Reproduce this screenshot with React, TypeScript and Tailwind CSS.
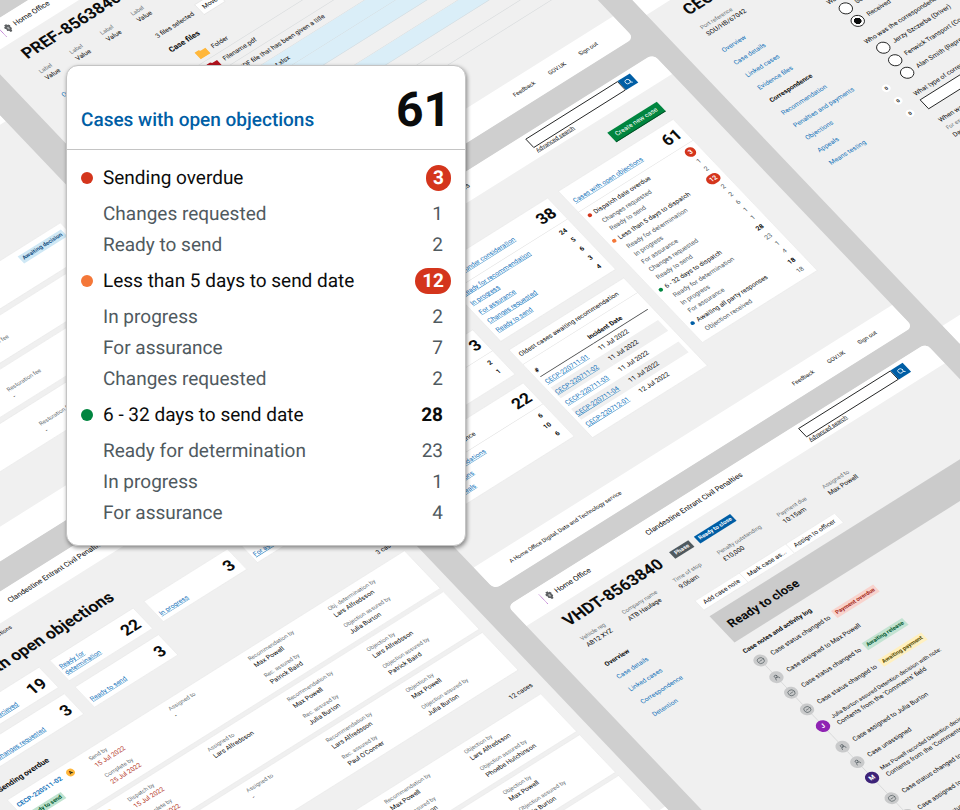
import React from "react";
import { CircleMinus, Search, UserRound } from "lucide-react";

const LINK = "text-[#1373ba] underline decoration-1 underline-offset-2";

type Line = { label: string; value: string; dot?: string; badge?: boolean };

function Logo() {
  return (
    <div className="flex items-center gap-2">
      <span className="h-[30px] w-0 border-l-2 border-dotted border-[#8f23b3]" />
      <svg width="18" height="26" viewBox="0 0 16 22" fill="#5c5f61" aria-hidden="true">
        <path d="M5 1h6l-1 3h3l2 4-2 3 1 4-3 2-1 4H6l-1-4-3-2 1-4-2-3 2-4h3z" />
        <path d="M6 8h4v5l-2 2-2-2z" fill="#a9abac" />
      </svg>
      <span className="text-[18px] leading-6">Home Office</span>
    </div>
  );
}

function TopBar({ id }: { id: string }) {
  return (
    <header className="grid h-[67px] shrink-0 grid-cols-[298px_1fr_300px] bg-white px-[75px]">
      <div className="pt-[18px]">
        <Logo />
      </div>
      <div className="pt-5 text-[18px] leading-6">Clandestine Entrant Civil Penalties</div>
      <form className="pt-2.5" onSubmit={(e) => e.preventDefault()}>
        <div className="flex h-[30px]">
          <input id={id} type="text" aria-label="Search cases" className="min-w-0 flex-1 border-2 border-[#0b0c0c] bg-white px-2" />
          <button type="submit" aria-label="Search" className="flex w-[35px] items-center justify-center bg-[#005ea5] text-white">
            <Search size={18} strokeWidth={2.5} />
          </button>
        </div>
        <a href="#advanced" className="block text-[14px] leading-5 underline">
          Advanced search
        </a>
      </form>
    </header>
  );
}

function BottomBar() {
  return (
    <footer className="flex h-[73px] shrink-0 items-center justify-between bg-white px-[75px] text-[14px]">
      <span>A Home Office Digital, Data and Technology service</span>
      <nav className="flex gap-10">
        <a href="#feedback">Feedback</a>
        <a href="#govuk">GOV.UK</a>
        <a href="#signout">Sign out</a>
      </nav>
    </footer>
  );
}

function Screen({ place, id, children }: { place: string; id: string; children: React.ReactNode }) {
  return (
    <section className={`absolute flex w-[1200px] flex-col overflow-hidden rounded-[16px] bg-[#f0f0f0] ${place}`}>
      <TopBar id={id} />
      <div className="flex-1 px-[75px]">{children}</div>
      <BottomBar />
    </section>
  );
}

function Field({ label, value, red }: { label: string; value: string; red?: boolean }) {
  return (
    <div>
      <div className="text-[14px] leading-5 text-[#6a7276]">{label}</div>
      <div className={red ? "text-[16px] leading-[22px] text-[#b5382a]" : "text-[16px] leading-[22px]"}>{value}</div>
    </div>
  );
}

function CaseHead({ title, tags, fields }: { title: string; tags?: React.ReactNode; fields: [string, string][] }) {
  return (
    <>
      <div className="flex items-center gap-8 pt-6">
        <h1 className="text-[40px] leading-10 font-bold">{title}</h1>
        <div className="flex items-center gap-4">{tags}</div>
      </div>
      <div className="flex gap-12 pt-[26px]">
        {fields.map(([l, v], i) => (
          <Field key={i} label={l} value={v} />
        ))}
      </div>
    </>
  );
}

function SideNav({ items, current, counts }: { items: string[]; current: string; counts?: Record<string, number> }) {
  return (
    <nav className="w-[240px] shrink-0">
      {items.map((item) => (
        <div key={item} className="flex h-[42px] items-center justify-between text-[16px]">
          <a href="#case" className={item === current ? "font-bold" : "text-[#1373ba]"}>
            {item}
          </a>
          {counts && item in counts && (
            <span className="flex size-5 items-center justify-center rounded-full bg-white text-[12px] font-bold">{counts[item]}</span>
          )}
        </div>
      ))}
    </nav>
  );
}

const FILES = [
  { name: "Folder", kind: "#ffb73b" },
  { name: "Filename.pdf", kind: "#b1121d" },
  { name: "A PDF file that has been given a title", kind: "#b1121d" },
  { name: "Spreadsheet.xlsx", kind: "#00703c", on: true },
  { name: "", on: true },
  { name: "" },
  { name: "", on: true },
  { name: "" },
  { name: "" },
];

function FilesScreen() {
  return (
    <Screen id="search-files" place="left-[-127px] top-[37px] min-h-[878px]">
      <CaseHead
        title="PREF-8563840"
        fields={[
          ["Label", "Value"],
          ["Label", "Value"],
          ["Label", "Value"],
          ["Label", "Value"],
        ]}
      />
      <div className="flex gap-[30px] pt-[26px]">
        <SideNav items={["Overview", "Case details", "Evidence files"]} current="Evidence files" />
        <div className="flex-1">
          <div className="flex items-center gap-4 pt-1 text-[16px]">
            <span>3 files selected</span>
            <button className="h-[34px] border border-[#d0d0d0] bg-white px-2.5">Move</button>
          </div>
          <h2 className="pt-[18px] text-[19px] leading-6 font-bold">Case files</h2>
          <div className="mt-4">
            {FILES.map((f, i) => (
              <div
                key={i}
                className={`flex h-[41px] items-center gap-3 border-b border-[#cfd3d5] pl-10 text-[16px] ${f.on ? "bg-[#daeef8]" : ""}`}
              >
                {f.kind && (
                  <svg width="30" height="24" viewBox="0 0 30 24" fill={f.kind} aria-hidden="true">
                    <path d="M1 1h11l3 4h14v18H1z" />
                  </svg>
                )}
                <span>{f.name}</span>
              </div>
            ))}
          </div>
        </div>
      </div>
    </Screen>
  );
}

function RestorationScreen() {
  return (
    <Screen id="search-restoration" place="left-[-1397px] top-[195px] min-h-[984px]">
      <div className="flex flex-col gap-3 pt-[285px]">
        {[0, 1, 2, 3].map((n) => (
          <div key={n} className="flex h-[102px] justify-between border border-[#dedede] bg-white pl-[667px]">
            <div className="pt-11">
              <Field label="Restoration fee" value="-" />
            </div>
            {n === 0 && (
              <span className="mt-3.5 mr-2.5 flex h-[23px] items-center bg-[#cfe8f5] px-1.5 text-[14px] font-bold text-[#144e81]">
                Awaiting decision
              </span>
            )}
          </div>
        ))}
      </div>
    </Screen>
  );
}

function CountCard({ title, total, plain, rows }: { title: string; total: number; plain?: boolean; rows: [string, number][] }) {
  return (
    <div className="border border-[#dedede] bg-white">
      <div className="flex h-[70px] items-end justify-between border-b border-[#d5d5d5] px-2.5 pt-4 pb-4">
        {plain ? (
          <span className="text-[16px] leading-6">{title}</span>
        ) : (
          <a href="#cases" className={`text-[16px] leading-6 ${LINK}`}>
            {title}
          </a>
        )}
        <strong className="self-start text-[40px] leading-10">{total}</strong>
      </div>
      <div className="pt-1.5 pr-5 pb-3 pl-2.5">
        {rows.map(([l, n]) => (
          <div key={l} className="flex h-[30px] items-center justify-between text-[16px]">
            <a href="#cases" className={LINK}>
              {l}
            </a>
            <strong>{n}</strong>
          </div>
        ))}
      </div>
    </div>
  );
}

const DISPATCH: Line[] = [
  { label: "Dispatch date overdue", value: "3", dot: "bg-[#d4351c]", badge: true },
  { label: "Changes requested", value: "1" },
  { label: "Ready to send", value: "2" },
  { label: "Less than 5 days to dispatch", value: "12", dot: "bg-[#f47738]", badge: true },
  { label: "Ready for determination", value: "2" },
  { label: "In progress", value: "2" },
  { label: "For assurance", value: "6" },
  { label: "Changes requested", value: "1" },
  { label: "Ready to send", value: "1" },
  { label: "6 - 32 days to dispatch", value: "28", dot: "bg-[#00853f]" },
  { label: "Ready for determination", value: "23" },
  { label: "In progress", value: "1" },
  { label: "For assurance", value: "4" },
  { label: "Awaiting all party responses", value: "18", dot: "bg-[#005ea5]" },
  { label: "Objection received", value: "18" },
];

function DispatchCard() {
  return (
    <div className="border border-[#dedede] bg-white pb-2.5">
      <div className="flex h-[70px] items-end justify-between border-b border-[#d5d5d5] px-2.5 pt-4 pb-4">
        <a href="#objections" className={`text-[16px] leading-6 ${LINK}`}>
          Cases with open objections
        </a>
        <strong className="self-start text-[40px] leading-10">61</strong>
      </div>
      <ul className="pt-1 pr-5 pl-2.5 text-[16px]">
        {DISPATCH.map((r, i) => (
          <li key={i} className={`flex items-center ${r.dot ? "h-[34px]" : "h-[26px] text-[#505a5f]"}`}>
            <span className={`mr-2 size-2.5 rounded-full ${r.dot ?? ""}`} />
            <span className="flex-1">{r.label}</span>
            {r.badge ? (
              <strong className="-mr-2 rounded-full bg-[#d4351c] px-2 leading-[26px] text-white">{r.value}</strong>
            ) : r.dot ? (
              <strong>{r.value}</strong>
            ) : (
              <span>{r.value}</span>
            )}
          </li>
        ))}
      </ul>
    </div>
  );
}

const OLDEST: [string, string][] = [
  ["CECP-220711-01", "11 Jul 2022"],
  ["CECP-220711-02", "11 Jul 2022"],
  ["CECP-220711-03", "11 Jul 2022"],
  ["CECP-220711-04", "11 Jul 2022"],
  ["CECP-220712-01", "12 Jul 2022"],
];

function DashboardScreen() {
  return (
    <Screen id="search-dashboard" place="left-[-120px] top-[974px] min-h-[915px]">
      <div className="flex justify-end pt-[38px]">
        <button className="h-[32px] border-b-2 border-[#00401e] bg-[#00853f] px-3 text-[16px] text-white">Create new case</button>
      </div>
      <div className="grid grid-cols-3 items-start gap-[30px] pt-[26px]">
        <div className="flex flex-col gap-7">
          <CountCard title="Cases on hold" total={5} rows={[["Awaiting evidence", 3], ["Awaiting payment", 2]]} />
          <CountCard title="Cases with appeals" total={3} rows={[["In progress", 2], ["Ready to send", 1]]} />
          <CountCard
            title="Cases for assurance"
            plain
            total={22}
            rows={[
              ["Recommendations", 6],
              ["Objections", 10],
              ["Appeals", 6],
            ]}
          />
        </div>
        <div className="flex flex-col gap-7">
          <CountCard
            title="Cases under consideration"
            total={38}
            rows={[
              ["Ready for recommendation", 24],
              ["In progress", 5],
              ["For assurance", 6],
              ["Changes requested", 3],
              ["Ready to send", 4],
            ]}
          />
          <div className="border border-[#dedede] bg-white pb-4 text-[16px]">
            <div className="border-b border-[#d5d5d5] px-2.5 py-3 leading-6">Oldest cases awaiting recommendation</div>
            <div className="px-2.5 pt-3">
              <table className="w-full border-collapse text-left">
                <thead>
                  <tr className="h-9 border-b-2 border-[#3a3c3d]">
                    <th className="w-[152px]">#</th>
                    <th>Incident Date</th>
                  </tr>
                </thead>
                <tbody>
                  {OLDEST.map(([c, d]) => (
                    <tr key={c} className="h-[36px] even:bg-[#f0f0f0]">
                      <td>
                        <a href="#case" className={LINK}>
                          {c}
                        </a>
                      </td>
                      <td>{d}</td>
                    </tr>
                  ))}
                </tbody>
              </table>
            </div>
          </div>
        </div>
        <DispatchCard />
      </div>
    </Screen>
  );
}

const TILES: [string, number][] = [
  ["Objection recieved", 19],
  ["Ready for determination", 22],
  ["In progress", 3],
  ["For assurance", 5],
  ["Changes requested", 3],
  ["Ready to send", 3],
];

type CaseRow = {
  send: string;
  done: string;
  assigned: string;
  rec: string;
  recBy: string;
  objLabel: string;
  obj: string;
  objBy: string;
};

const OVERDUE: CaseRow[] = [
  { send: "Send by", done: "25 Jul 2022", assigned: "-", rec: "Max Powell", recBy: "Patrick Baird", objLabel: "Obj. determination by", obj: "Lars Alfredsson", objBy: "Julia Burton" },
  { send: "Dispatch by", done: "25 Jul 2022", assigned: "Lars Alfredsson", rec: "Max Powell", recBy: "Julia Burton", objLabel: "Objection by", obj: "Lars Alfredsson", objBy: "Patrick Baird" },
  { send: "Dispatch by", done: "25 Jul 2022", assigned: "-", rec: "Lars Alfredsson", recBy: "Paul O'Conner", objLabel: "Objection by", obj: "Max Powell", objBy: "Julia Burton" },
];

const SOON: CaseRow[] = [
  { send: "Dispatch by", done: "25 Jul 2022", assigned: "-", rec: "Max Powell", recBy: "Julia Burton", objLabel: "Objection by", obj: "Lars Alfredsson", objBy: "Phoebe Hutchinson" },
  { send: "Dispatch by", done: "25 Jul 2022", assigned: "-", rec: "Max Powell", recBy: "Julia Burton", objLabel: "Objection by", obj: "Max Powell", objBy: "Julia Burton" },
  { send: "Dispatch by", done: "25 Jul 2022", assigned: "-", rec: "Max Powell", recBy: "Julia Burton", objLabel: "Objection by", obj: "Max Powell", objBy: "Julia Burton" },
];

function CaseGroup({ title, count, rows }: { title: string; count: string; rows: CaseRow[] }) {
  return (
    <div className="-mx-[45px] pt-9">
      <div className="flex justify-between leading-6">
        <h2 className="text-[19px] font-bold">{title}</h2>
        <span className="text-[16px]">{count}</span>
      </div>
      <div className="flex flex-col gap-2.5 pt-[19px]">
        {rows.map((r, i) => (
          <div
            key={i}
            className="grid h-[127px] grid-cols-[196px_repeat(4,1fr)] gap-3 border border-[#dedede] bg-white pt-[13px] pr-5 pl-2"
          >
            <div>
              <div className="flex items-center gap-4">
                <a href="#case" className="text-[16px] leading-6 font-bold text-[#1373ba]">
                  CECP-220511-02
                </a>
                <span className="flex size-5 items-center justify-center rounded-full bg-[#ffb73b] text-[12px] font-bold">A</span>
              </div>
              <span className="mt-4 inline-block bg-[#bfe3cf] px-1.5 text-[14px] leading-5 font-bold text-[#005a30]">Ready to send</span>
            </div>
            <div className="flex flex-col gap-3.5">
              <Field label={r.send} value="15 Jul 2022" red />
              <Field label="Complete by" value={r.done} red />
            </div>
            <Field label="Assigned to" value={r.assigned} />
            <div className="flex flex-col gap-3.5">
              <Field label="Recommendation by" value={r.rec} />
              <Field label="Rec. assured by" value={r.recBy} />
            </div>
            <div className="flex flex-col gap-3.5">
              <Field label={r.objLabel} value={r.obj} />
              <Field label="Objection assured by" value={r.objBy} />
            </div>
          </div>
        ))}
      </div>
    </div>
  );
}

function ObjectionsScreen() {
  return (
    <Screen id="search-objections" place="left-[-1385px] top-[1242px] min-h-[1400px]">
      <div className="flex gap-5 pt-3 text-[14px] leading-5">
        <a href="#home">Dashboard</a>
        <span>Cases with open objections</span>
      </div>
      <h1 className="pt-9 text-[40px] leading-10 font-bold">Cases with open objections</h1>
      <div className="grid grid-cols-4 gap-x-[30px] gap-y-5 pt-[35px]">
        {TILES.map(([label, n]) => (
          <div key={label} className="flex h-[69px] justify-between border border-[#dedede] bg-white pr-2.5 pl-1.5">
            <div className="w-[140px] self-end pb-2.5 text-[16px] leading-5">
              <a href="#cases" className={LINK}>
                {label}
              </a>
            </div>
            <strong className="pt-[17px] pr-1 text-[40px] leading-10">{n}</strong>
          </div>
        ))}
      </div>
      <CaseGroup title="Sending overdue" count="3 cases" rows={OVERDUE} />
      <CaseGroup title="Less than 5 days to send date" count="12 cases" rows={SOON} />
    </Screen>
  );
}

type Event = { kind: "status" | "person" | "note"; text: string; tag?: string; tone?: string; initial?: string; by?: string };

const LOG: Event[] = [
  { kind: "status", text: "Case status changed to", tag: "Payment overdue", tone: "bg-[#f8d3cd] text-[#a82a1a]" },
  { kind: "person", text: "Case assigned to Max Powell" },
  { kind: "status", text: "Case status changed to", tag: "Awaiting release", tone: "bg-[#c3e3d2] text-[#005a30]" },
  { kind: "status", text: "Case status changed to", tag: "Awaiting payment", tone: "bg-[#fff0bf] text-[#594d00]" },
  { kind: "note", text: "Contents from the ‘Comments’ field", by: "Julia Burton assured Detention decision with note:", initial: "J", tone: "bg-[#8f23b3]" },
  { kind: "person", text: "Case assigned to Julia Burton" },
  { kind: "person", text: "Case unassigned" },
  { kind: "note", text: "Contents from the ‘Comments’ field", by: "Max Powell recorded Detention decision with note:", initial: "M", tone: "bg-[#3d2378]" },
  { kind: "status", text: "Case status changed to", tag: "Awaiting decision", tone: "bg-[#cfe8f5] text-[#144e81]" },
  { kind: "person", text: "Case assigned to Max Powell" },
  { kind: "status", text: "Case status changed to", tag: "Awaiting decision", tone: "bg-[#cfe8f5] text-[#144e81]" },
];

function LogItem({ e, last }: { e: Event; last: boolean }) {
  const height = e.kind === "note" ? "h-[69px]" : e.kind === "status" ? "h-[56px]" : "h-[52px]";
  return (
    <li className={`flex gap-[15px] ${height}`}>
      <div className="flex w-8 flex-col items-center">
        <span
          className={`flex size-8 shrink-0 items-center justify-center rounded-full text-[16px] font-bold ${
            e.initial ? `text-white ${e.tone}` : "bg-[#c9cacb] text-[#505a5f]"
          }`}
        >
          {e.initial ?? (e.kind === "status" ? <CircleMinus size={19} /> : <UserRound size={16} strokeWidth={2.5} />)}
        </span>
        {!last && <span className="w-px flex-1 bg-[#c9cacb]" />}
      </div>
      {e.kind === "note" ? (
        <div className="text-[16px] leading-6 whitespace-nowrap">
          <div className="text-[14px] leading-[18px]">{e.by}</div>
          {e.text}
        </div>
      ) : (
        <div className="flex h-8 items-center gap-3 text-[16px]">
          <span>{e.text}</span>
          {e.tag && <strong className={`px-1.5 text-[14px] leading-[23px] ${e.tone}`}>{e.tag}</strong>}
        </div>
      )}
    </li>
  );
}

function LogScreen() {
  return (
    <Screen id="search-log" place="left-[-125px] top-[1941px] min-h-[1300px]">
      <CaseHead
        title="VHDT-8563840"
        tags={
          <>
            <strong className="bg-[#505a5f] px-2 text-[14px] leading-[22px] text-white">Phase</strong>
            <strong className="bg-[#005ea5] px-1.5 text-[14px] leading-[23px] text-white">Ready to close</strong>
          </>
        }
        fields={[
          ["Vehicle reg", "AB12 XYZ"],
          ["Company name", "ATB Haulage"],
          ["Time of stop", "9:06am"],
          ["Penalty outstanding", "£10,000"],
          ["Payment due", "10:15am"],
          ["Assigned to", "Max Powell"],
        ]}
      />
      <div className="flex gap-[30px] pt-[33px]">
        <SideNav items={["Overview", "Case details", "Linked cases", "Correspondence", "Detention"]} current="Overview" />
        <div className="flex-1 pt-1">
          <div className="flex text-[16px]">
            {["Add case note", "Mark case as...", "Assign to officer"].map((b) => (
              <button key={b} className="-mr-px h-8 border border-[#dedede] bg-white px-3">
                {b}
              </button>
            ))}
          </div>
          <h2 className="mt-5 flex h-[88px] items-center bg-[#cbcbcb] px-5 text-[30px] font-bold">Ready to close</h2>
          <h3 className="pt-[22px] text-[16px] leading-5 font-bold">Case notes and activity log</h3>
          <ul className="pt-3.5">
            {LOG.map((e, i) => (
              <LogItem key={i} e={e} last={i === LOG.length - 1} />
            ))}
          </ul>
        </div>
      </div>
    </Screen>
  );
}

function Radios({ name, question, options, chosen }: { name: string; question: string; options: string[]; chosen?: string }) {
  return (
    <fieldset className="pb-6">
      <legend className="leading-5">{question}</legend>
      {options.map((o) => (
        <label key={o} className="flex h-[42px] items-center gap-3 pl-2 first-of-type:mt-1">
          <input
            type="radio"
            name={name}
            defaultChecked={o === chosen}
            className="size-8 shrink-0 appearance-none rounded-full border-2 border-[#0b0c0c] bg-white checked:bg-[radial-gradient(circle,#0b0c0c_8px,#ffffff_9px)]"
          />
          {o}
        </label>
      ))}
    </fieldset>
  );
}

function CorrespondenceScreen() {
  return (
    <Screen id="search-correspondence" place="left-[1135px] top-[816px] min-h-[1183px]">
      <CaseHead title="CECP-220711-01" fields={[["Port reference", "SOU/HB/67042"]]} />
      <div className="flex gap-[30px] pt-[23px]">
        <SideNav
          items={[
            "Overview",
            "Case details",
            "Linked cases",
            "Evidence files",
            "Correspondence",
            "Recommendation",
            "Penalties and payments",
            "Objections",
            "Appeals",
            "Means testing",
          ]}
          current="Correspondence"
          counts={{ Objections: 0, Appeals: 0, "Means testing": 0 }}
        />
        <div className="flex-1 pt-[49px] text-[16px]">
          <Radios name="direction" question="Was the correspondence sent or received?" options={["Sent", "Received"]} chosen="Received" />
          <Radios
            name="from"
            question="Who was the correspondence from?"
            options={["Jerzy Szczerba (Driver)", "Fenwick Transport (Company)", "Alan Smith (Representative)"]}
          />
          <label htmlFor="kind" className="block leading-5">
            What type of correspondence was it?
          </label>
          <input id="kind" type="text" className="mt-2 h-8 w-[320px] border-2 border-[#0b0c0c] bg-white px-2" />
          <div className="mt-7 leading-5">When was it received?</div>
          <div className="pt-1 text-[14px] leading-6 text-[#6a7276]">For example, 27 3 2022</div>
          <div className="leading-6">Day</div>
        </div>
      </div>
    </Screen>
  );
}

const SENDING: Line[] = [
  { label: "Sending overdue", value: "3", dot: "bg-[#d4351c]", badge: true },
  { label: "Changes requested", value: "1" },
  { label: "Ready to send", value: "2" },
  { label: "Less than 5 days to send date", value: "12", dot: "bg-[#f47738]", badge: true },
  { label: "In progress", value: "2" },
  { label: "For assurance", value: "7" },
  { label: "Changes requested", value: "2" },
  { label: "6 - 32 days to send date", value: "28", dot: "bg-[#00853f]" },
  { label: "Ready for determination", value: "23" },
  { label: "In progress", value: "1" },
  { label: "For assurance", value: "4" },
];

function Spotlight() {
  return (
    <article className="relative mt-[65px] ml-[66px] w-[400px] rounded-[12px] border border-[#c4c4c4] bg-white pb-4 shadow-[1px_2px_4px_rgba(0,0,0,0.45)]">
      <div className="flex items-baseline justify-between border-b border-[#c4c4c4] px-[14px] pt-5 pb-[14px]">
        <a href="#objections" className="text-[19px] font-medium text-[#005ea5]">
          Cases with open objections
        </a>
        <strong className="text-[48px] leading-[48px]">61</strong>
      </div>
      <ul className="pt-2 pr-[22px] pl-[14px] text-[19px]">
        {SENDING.map((r, i) => (
          <li key={i} className={`flex items-center ${r.dot ? "h-[41px]" : "h-[31px] text-[#505a5f]"}`}>
            <span className={`mr-2.5 size-3 rounded-full ${r.dot ?? ""}`} />
            <span className="flex-1">{r.label}</span>
            {r.badge ? (
              <strong className="-mr-2 rounded-full bg-[#d4351c] px-[7px] leading-[26px] text-white">{r.value}</strong>
            ) : r.dot ? (
              <strong>{r.value}</strong>
            ) : (
              <span>{r.value}</span>
            )}
          </li>
        ))}
      </ul>
    </article>
  );
}

export default function App() {
  return (
    <main className="relative flex h-screen w-full items-start overflow-hidden bg-[#cfcfcf] font-['Roboto','Liberation_Sans',sans-serif] text-[#0b0c0c] [text-rendering:geometricPrecision]">
      <div className="absolute top-0 left-0 size-0 origin-top-left [transform:matrix(0.3487,-0.2188,0.2839,0.2981,0,0)]">
        <FilesScreen />
        <RestorationScreen />
        <DashboardScreen />
        <ObjectionsScreen />
        <LogScreen />
        <CorrespondenceScreen />
      </div>
      <Spotlight />
    </main>
  );
}
